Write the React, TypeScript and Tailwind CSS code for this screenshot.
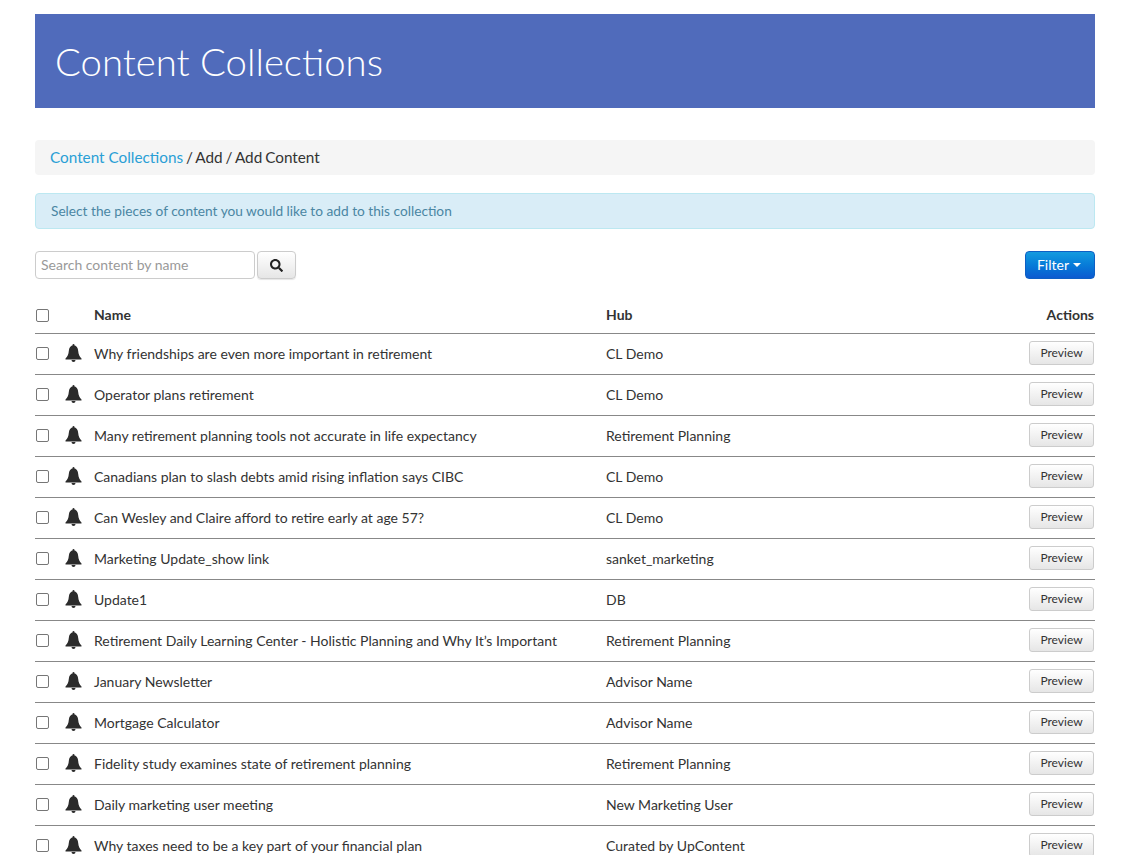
import React from "react";
import { FaSearch } from "react-icons/fa";

const rows = [
  { name: "Why friendships are even more important in retirement", hub: "CL Demo" },
  { name: "Operator plans retirement", hub: "CL Demo" },
  { name: "Many retirement planning tools not accurate in life expectancy", hub: "Retirement Planning" },
  { name: "Canadians plan to slash debts amid rising inflation says CIBC", hub: "CL Demo" },
  { name: "Can Wesley and Claire afford to retire early at age 57?", hub: "CL Demo" },
  { name: "Marketing Update_show link", hub: "sanket_marketing" },
  { name: "Update1", hub: "DB" },
  { name: "Retirement Daily Learning Center - Holistic Planning and Why It’s Important", hub: "Retirement Planning" },
  { name: "January Newsletter", hub: "Advisor Name" },
  { name: "Mortgage Calculator", hub: "Advisor Name" },
  { name: "Fidelity study examines state of retirement planning", hub: "Retirement Planning" },
  { name: "Daily marketing user meeting", hub: "New Marketing User" },
  { name: "Why taxes need to be a key part of your financial plan", hub: "Curated by UpContent" },
];

const Checkbox = () => (
  <span className="block size-[13px] rounded-[2px] border border-[#767676] bg-white" />
);

const Bell = () => (
  <svg viewBox="0 0 17 18" className="ml-[16px] h-[18px] w-[17px] fill-[#2b2b2b]">
    <circle cx="8.5" cy="1" r="1" />
    <path d="M8.5 1C5.5 1.5 4 4 3.8 7C3.6 10.5 2.5 12.5.5 14.5V15.5H16.5V14.5C14.5 12.5 13.4 10.5 13.2 7C13 4 11.5 1.5 8.5 1Z" />
    <path d="M6.5 16a2 2 0 0 0 4 0Z" />
  </svg>
);

export default function App() {
  return (
    <div className="h-screen overflow-hidden bg-white pl-[35px] pr-[42px] pt-[14px] font-['Lato',sans-serif] text-[14px] text-[#333]">
      <header className="flex h-[94px] items-center bg-[#506bbb] pl-[20px] pt-[1px]">
        <h1 className="text-[38.3px] leading-none font-light text-white">Content Collections</h1>
      </header>

      <nav className="mt-[32px] flex h-[35px] items-center rounded-[4px] bg-[#f5f5f5] pl-[15px] text-[15.3px]">
        <a className="text-[#2a9fd6]">Content Collections</a>
        <span className="whitespace-pre [word-spacing:-1px]"> / Add / Add Content</span>
      </nav>

      <div className="mt-[18px] flex h-[36px] items-center rounded-[4px] border border-[#bce8f1] bg-[#d9edf7] pl-[15px] text-[13.7px] text-[#4a86a3]">
        Select the pieces of content you would like to add to this collection
      </div>

      <div className="mt-[22px] flex h-[28px] items-center">
        <input
          placeholder="Search content by name"
          className="h-[28px] w-[220px] rounded-[4px] border border-[#ccc] bg-white px-[5px] pb-[2px] text-[14px] placeholder:text-[#999]"
        />
        <button className="ml-[2px] flex h-[28px] w-[39px] items-center justify-center rounded-[4px] border border-[#ccc] bg-gradient-to-b from-white to-[#e6e6e6] text-[#222] shadow-[0_1px_1px_rgba(0,0,0,0.1)]">
          <FaSearch className="size-[13px]" />
        </button>
        <button className="ml-auto flex h-[28px] w-[70px] items-center justify-center gap-[4px] rounded-[4px] border border-[#0d5fc4] bg-gradient-to-b from-[#149bdf] to-[#0d5ad0] pb-[2px] pr-[2px] text-[14px] text-white">
          Filter
          <span className="mt-[2px] border-x-[4px] border-t-[4px] border-x-transparent border-t-white" />
        </button>
      </div>

      <div className="mt-[18px] flex h-[37px] items-center border-b border-[#888] pb-[1px] font-bold">
        <div className="flex w-[59px] justify-start pl-[1px] pt-[2px]">
          <Checkbox />
        </div>
        <div className="w-[512px]">Name</div>
        <div className="flex-1">Hub</div>
        <div className="pr-[1px]">Actions</div>
      </div>

      {rows.map((row) => (
        <div key={row.name} className="flex h-[41px] items-center border-b border-[#888] pb-[2px]">
          <div className="flex w-[59px] items-center pl-[1px]">
            <Checkbox />
            <Bell />
          </div>
          <div className="w-[512px]">{row.name}</div>
          <div className="flex-1">{row.hub}</div>
          <button className="mr-[1px] h-[24px] w-[65px] rounded-[3px] border border-[#ccc] bg-gradient-to-b from-white to-[#e6e6e6] text-[12px] text-[#333]">
            Preview
          </button>
        </div>
      ))}
    </div>
  );
}
